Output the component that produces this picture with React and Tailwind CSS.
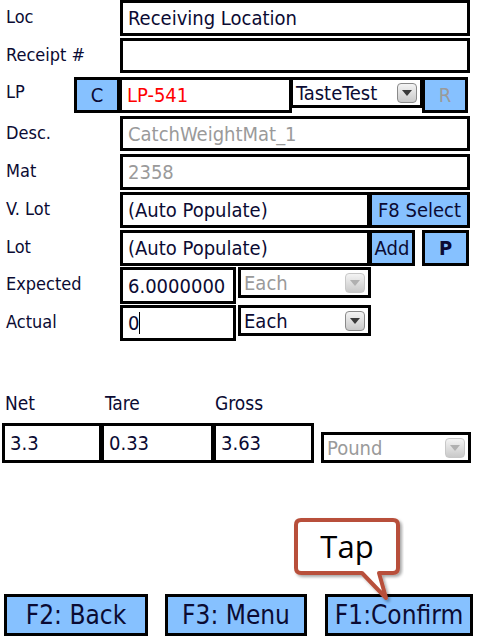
import React from 'react';

const font = { fontFamily: '"DejaVu Sans Condensed", "DejaVu Sans", Tahoma, sans-serif' };

const Label = ({ children, className = "" }) => (
  <div className={`text-[18px] leading-none text-[#0b0b33] pl-[6px] ${className}`}>{children}</div>
);

const Box = ({ children, className = "" }) => (
  <div className={`border-[3px] border-black bg-white flex items-center pl-[5px] text-[20px] leading-none whitespace-nowrap overflow-hidden ${className}`}>
    {children}
  </div>
);

const Btn = ({ children, className = "" }) => (
  <div className={`border-[3px] border-black bg-[#86c1ff] flex items-center justify-center text-[20px] leading-none text-[#0b0b33] whitespace-nowrap ${className}`}>
    {children}
  </div>
);

const Arrow = ({ disabled }) => (
  <div className={`w-[20px] h-[20px] rounded-[4px] border flex items-center justify-center bg-gradient-to-b from-[#f4f4f4] to-[#c9c9c9] ${disabled ? 'border-[#c8c8c8]' : 'border-[#8a8a8a]'}`}>
    <svg width="10" height="6" viewBox="0 0 10 6">
      <path d="M0 0 L10 0 L5 6 Z" fill={disabled ? '#b0b0b0' : '#3a3a3a'} />
    </svg>
  </div>
);

const Select = ({ value, disabled, className = "" }) => (
  <div className={`border-[3px] border-black bg-white flex items-center justify-between pl-[3px] pr-[3px] text-[20px] leading-none ${disabled ? 'text-[#9a9a9a]' : 'text-[#0b0b33]'} ${className}`}>
    <span>{value}</span>
    <Arrow disabled={disabled} />
  </div>
);

const FieldRow = ({ label, children, className = "" }) => (
  <div className={`flex items-center ${className}`}>
    <div className="w-[120px] shrink-0 self-start pt-[8px]"><Label>{label}</Label></div>
    {children}
  </div>
);

export default function App() {
  return (
    <div className="relative w-[480px] h-[640px] bg-white overflow-hidden text-[#0b0b33]" style={font}>
      <div className="flex flex-col">
        <FieldRow label="Loc" className="h-[36px]">
          <Box className="w-[350px] h-[36px]">Receiving Location</Box>
        </FieldRow>
        <FieldRow label="Receipt #" className="h-[35px] mt-[2px]">
          <Box className="w-[350px] h-[35px]" />
        </FieldRow>
        <div className="flex h-[36px] mt-[4px]">
          <div className="w-[74px] pt-[6px]"><Label>LP</Label></div>
          <Btn className="w-[46px] h-[36px]">C</Btn>
          <Box className="w-[173px] h-[36px] -ml-[1px] text-[#ff0000]">LP-541</Box>
          <Select value="TasteTest" className="w-[133px] h-[31px] -ml-[2px]" />
          <Btn className="w-[46px] h-[36px] -ml-[1px]"><span className="text-[#9a9a9a]">R</span></Btn>
        </div>
        <FieldRow label="Desc." className="h-[35px] mt-[3px]">
          <Box className="w-[350px] h-[35px] text-[#9a9a9a]">CatchWeightMat_1</Box>
        </FieldRow>
        <FieldRow label="Mat" className="h-[36px] mt-[3px]">
          <Box className="w-[350px] h-[36px] text-[#9a9a9a]">2358</Box>
        </FieldRow>
        <FieldRow label="V. Lot" className="h-[36px] mt-[2px]">
          <Box className="w-[250px] h-[36px]">(Auto Populate)</Box>
          <Btn className="w-[101px] h-[36px] -ml-[1px]">F8 Select</Btn>
        </FieldRow>
        <FieldRow label="Lot" className="h-[36px] mt-[2px]">
          <Box className="w-[250px] h-[36px]">(Auto Populate)</Box>
          <Btn className="w-[46px] h-[36px] -ml-[1px]">Add</Btn>
          <Btn className="w-[47px] h-[36px] ml-[7px] font-bold">P</Btn>
        </FieldRow>
        <FieldRow label="Expected" className="h-[37px] mt-[1px]">
          <Box className="w-[116px] h-[37px]">6.0000000</Box>
          <Select value="Each" disabled className="w-[133px] h-[31px] ml-[2px] self-start" />
        </FieldRow>
        <FieldRow label="Actual" className="h-[36px] mt-[1px]">
          <Box className="w-[116px] h-[36px]">0<span className="inline-block w-[1px] h-[22px] bg-black" /></Box>
          <Select value="Each" className="w-[133px] h-[31px] ml-[2px] self-start" />
        </FieldRow>

        <div className="flex mt-[52px] h-[20px] text-[19px] leading-none items-end">
          <div className="w-[103px] pl-[5px]">Net</div>
          <div className="w-[112px] pl-[2px]">Tare</div>
          <div>Gross</div>
        </div>
        <div className="flex mt-[10px] pl-[2px] items-end">
          <Box className="w-[100px] h-[40px]">3.3</Box>
          <Box className="w-[113px] h-[40px] -ml-[1px]">0.33</Box>
          <Box className="w-[101px] h-[40px] -ml-[1px]">3.63</Box>
          <Select value="Pound" disabled className="w-[150px] h-[31px] ml-[7px]" />
        </div>
      </div>

      <div className="absolute left-0 right-0 top-[594px] flex">
        <Btn className="w-[144px] h-[42px] ml-[4px] text-[26px]">F2: Back</Btn>
        <Btn className="w-[142px] h-[42px] ml-[17px] text-[26px]">F3: Menu</Btn>
        <Btn className="w-[148px] h-[42px] ml-[18px] text-[26px]">F1:Confirm</Btn>
      </div>

      <div className="absolute left-[292px] top-[516px] w-[112px] h-[88px] pointer-events-none">
        <svg width="112" height="88" viewBox="0 0 112 88" className="absolute inset-0">
          <defs>
            <filter id="sh" x="-20%" y="-20%" width="140%" height="140%">
              <feDropShadow dx="2" dy="2" stdDeviation="1.5" floodColor="#000" floodOpacity="0.35" />
            </filter>
          </defs>
          <path
            d="M9 4 H101 Q106 4 106 9 V52 Q106 57 101 57 H87 L94 82 L70 57 H9 Q4 57 4 52 V9 Q4 4 9 4 Z"
            fill="#fff"
            stroke="#b8503a"
            strokeWidth="4"
            strokeLinejoin="round"
            filter="url(#sh)"
          />
        </svg>
        <div className="absolute left-[4px] top-[4px] w-[102px] h-[53px] flex items-center justify-center text-[31px] leading-none text-black" style={{ fontFamily: '"Open Sans", "DejaVu Sans", sans-serif' }}>
          Tap
        </div>
      </div>
    </div>
  );
}
